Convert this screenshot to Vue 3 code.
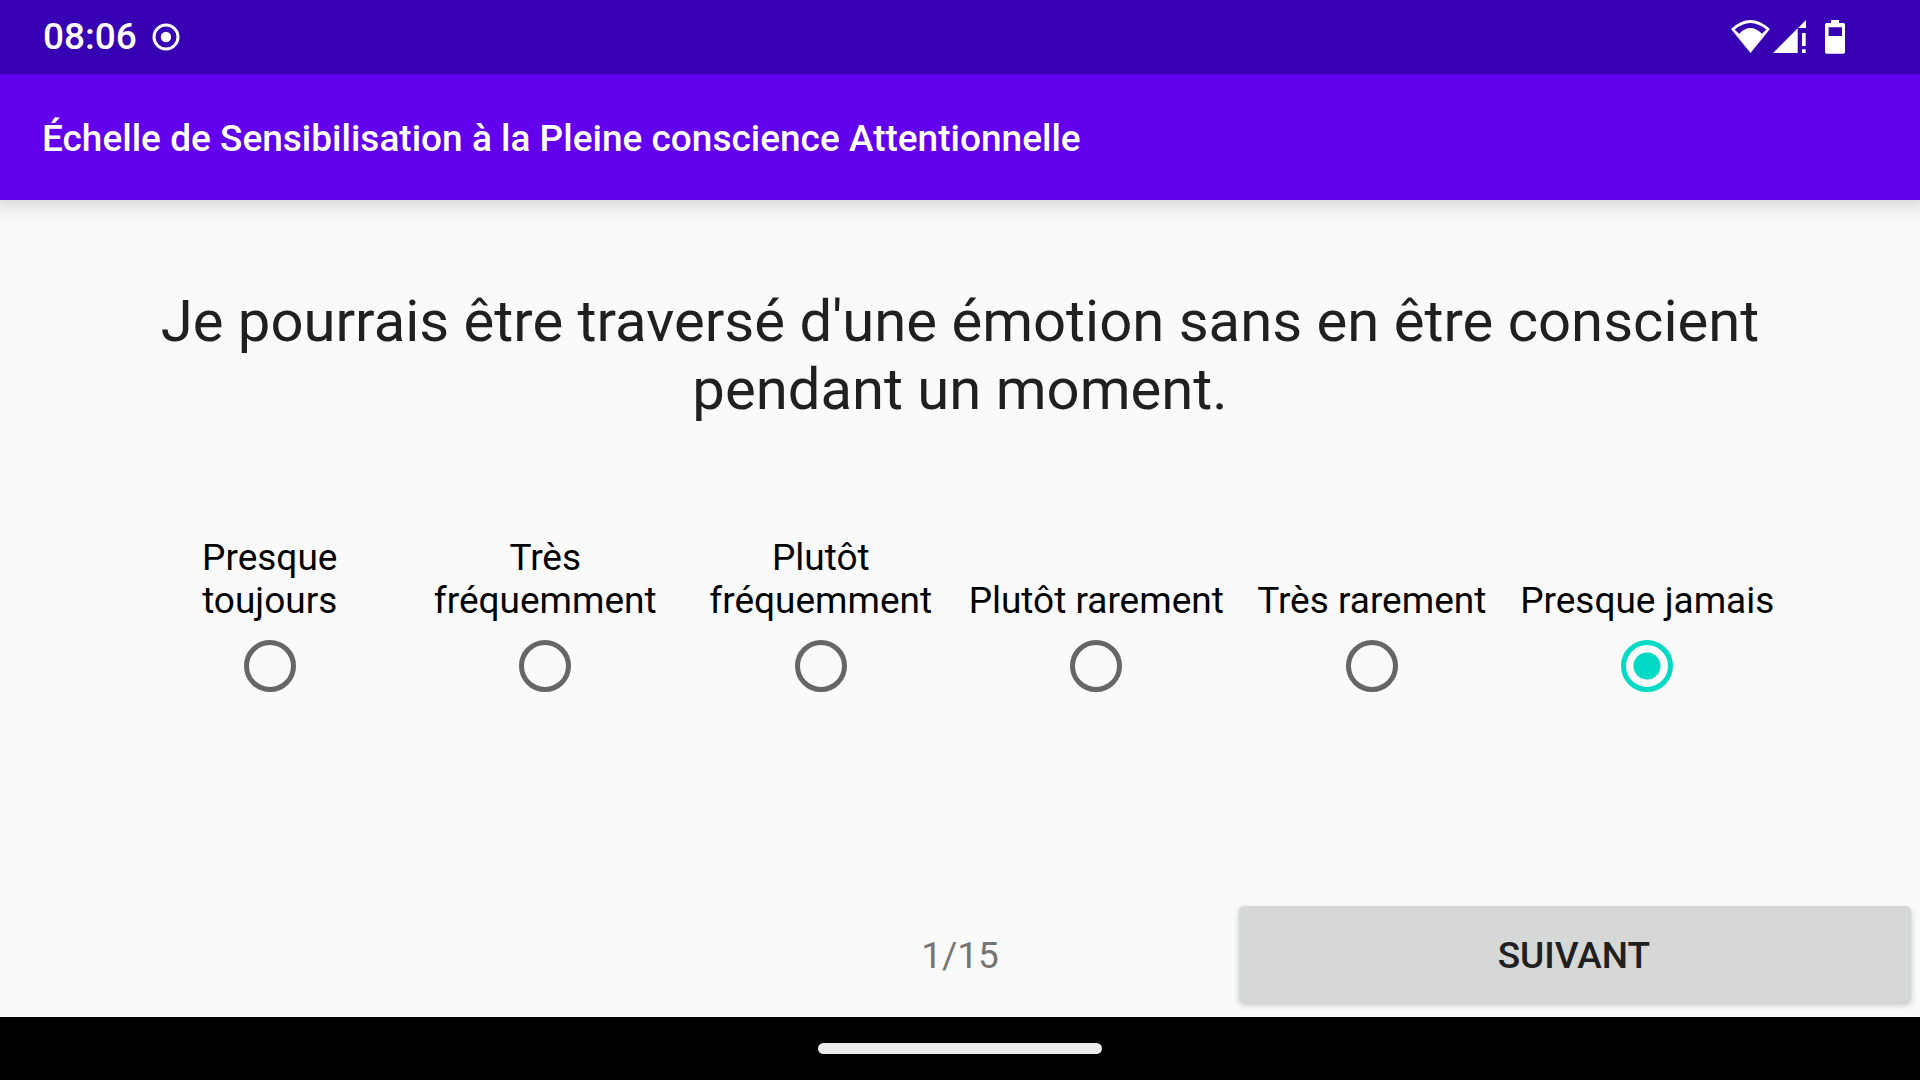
<script setup>
import { ref } from 'vue'

const question = "Je pourrais être traversé d'une émotion sans en être conscient pendant un moment."
const answers = [
  'Presque toujours',
  'Très fréquemment',
  'Plutôt fréquemment',
  'Plutôt rarement',
  'Très rarement',
  'Presque jamais',
]
const selected = ref(5)
</script>

<template>
  <div class="screen">
    <div class="status-bar">
      <div class="status-left">
        <span class="clock">08:06</span>
        <svg class="icon" width="28" height="28" viewBox="0 0 28 28" aria-hidden="true">
          <circle cx="14" cy="14" r="12" fill="none" stroke="#fff" stroke-width="3" />
          <circle cx="14" cy="14" r="5.2" fill="#fff" />
        </svg>
      </div>
      <div class="status-right">
        <svg class="icon" width="39" height="34" viewBox="0 0 39 34" aria-hidden="true">
          <path
            fill="#fff"
            fill-rule="evenodd"
            d="M0 9Q19.5-9 39 9L19.5 33ZM3.7 9.5L8 13.7Q19.5 2.5 31 13.7L35.3 9.5Q19.5-3.5 3.7 9.5Z"
          />
        </svg>
        <svg class="icon" width="33" height="34" viewBox="0 0 33 34" aria-hidden="true">
          <path fill="#fff" d="M0 33L24.7 8.3V33ZM33 0V8H25ZM29 13h3.7v13H29ZM29 29.3h3.7V33H29Z" />
        </svg>
        <svg class="icon battery" width="20" height="34" viewBox="0 0 20 34" aria-hidden="true">
          <path
            fill="#fff"
            fill-rule="evenodd"
            d="M6 0h8v3h4.5Q20 3 20 4.5V32Q20 33.7 18.5 33.7h-17Q0 33.7 0 32V4.5Q0 3 1.5 3H6ZM3.6 7.3V16H17V7.3Z"
          />
        </svg>
      </div>
    </div>

    <header class="app-bar">
      <h1>Échelle de Sensibilisation à la Pleine conscience Attentionnelle</h1>
    </header>

    <main>
      <fieldset>
        <legend>{{ question }}</legend>
        <div class="answers">
          <label v-for="(answer, i) in answers" :key="answer" class="answer">
            <span>{{ answer }}</span>
            <input v-model="selected" type="radio" name="answer" :value="i" />
          </label>
        </div>
      </fieldset>

      <div class="footer">
        <span class="progress">1/15</span>
        <button type="button">SUIVANT</button>
      </div>
    </main>

    <div class="nav-bar">
      <div class="home-handle"></div>
    </div>
  </div>
</template>

<style>
body {
  margin: 0;
}
</style>

<style scoped>
.screen {
  display: flex;
  flex-direction: column;
  min-height: 100vh;
  background: #fafafa;
  font-family: Roboto, sans-serif;
  font-size: 37px;
  line-height: 43px;
  overflow-x: hidden;
}

.status-bar {
  display: flex;
  justify-content: space-between;
  align-items: center;
  height: 74px;
  padding: 0 75px 0 43px;
  background: #3700b3;
  color: #fff;
}

.status-left,
.status-right {
  display: flex;
  align-items: center;
}

.status-left {
  gap: 15px;
}

.status-right {
  gap: 3px;
}

.icon {
  display: block;
}

.battery {
  margin-left: 16px;
}

.clock {
  padding-bottom: 2px;
  font-weight: 500;
}

.app-bar {
  display: flex;
  align-items: center;
  box-sizing: border-box;
  min-height: 126px;
  padding: 2px 42px 0;
  background: #6200ee;
  color: #fff;
  box-shadow: 0 2px 16px 6px rgba(0, 0, 0, 0.13);
  clip-path: inset(0 0 -32px);
}

h1 {
  margin: 0;
  font-size: 37px;
  font-weight: 500;
}

main {
  display: flex;
  flex: 1;
  flex-direction: column;
  justify-content: space-between;
}

fieldset {
  min-width: 0;
  margin: 0;
  padding: 0 132px;
  border: 0;
}

legend {
  width: 100%;
  padding: 87px 0 113px;
  color: #202020;
  font-size: 58px;
  line-height: 68px;
  text-align: center;
}

.answers {
  display: grid;
  grid-template-columns: repeat(6, 1fr);
  padding-right: 3px;
}

.answer {
  display: flex;
  flex-direction: column;
  justify-content: flex-end;
  align-items: center;
  gap: 18px;
  padding: 0 8px;
  color: #000;
  text-align: center;
}

input {
  box-sizing: border-box;
  width: 52px;
  height: 52px;
  margin: 0;
  border: 5px solid #666;
  border-radius: 50%;
  appearance: none;
}

input:checked {
  border-color: #03dac5;
  background: radial-gradient(circle, #03dac5 13px, transparent 14px);
}

.footer {
  display: grid;
  grid-template-columns: 36fr 28fr 36fr;
  align-items: center;
}

.progress {
  grid-column: 2;
  padding-bottom: 2px;
  color: #757575;
  text-align: center;
}

button {
  height: 96px;
  margin: 10px 9px 15px 10px;
  padding: 2px 2px 0 0;
  border: 0;
  border-radius: 5px;
  background: #d6d7d7;
  box-shadow: 0 3px 6px rgba(0, 0, 0, 0.22);
  color: #202020;
  font: inherit;
  font-weight: 500;
}

.nav-bar {
  display: flex;
  justify-content: center;
  align-items: center;
  height: 63px;
  background: #000;
}

.home-handle {
  width: 284px;
  height: 11px;
  border-radius: 6px;
  background: #ebebeb;
}
</style>
